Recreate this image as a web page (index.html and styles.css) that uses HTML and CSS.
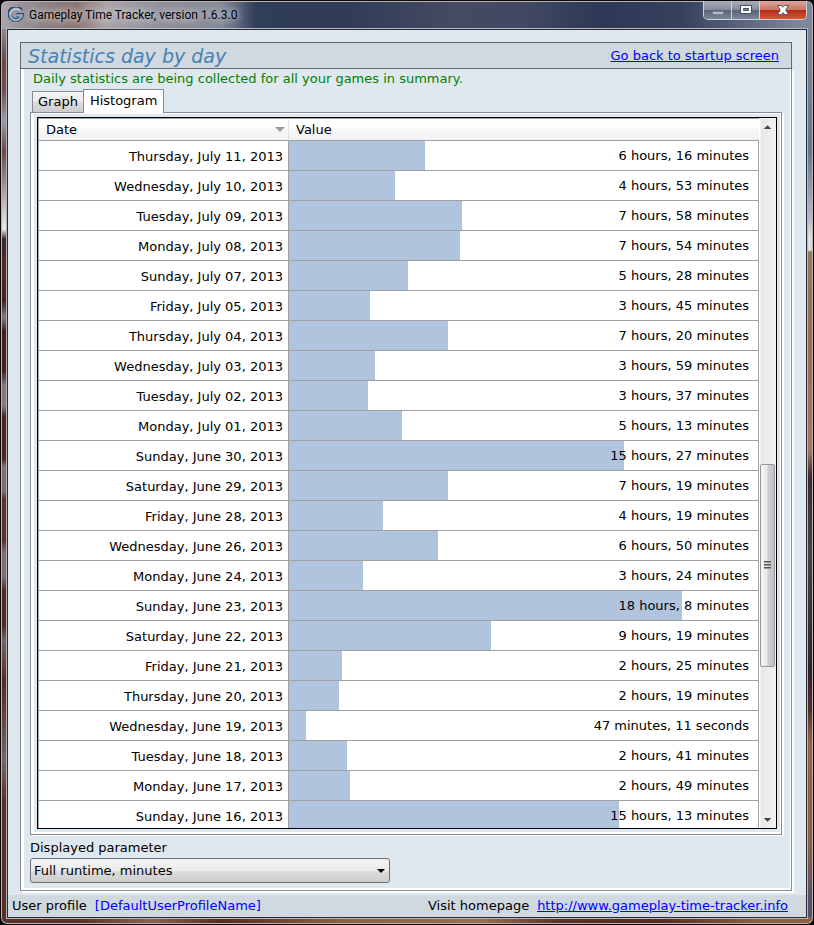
FILE: index.html
```html
<!DOCTYPE html>
<html lang="en">
<head>
  <meta charset="UTF-8">
  <meta name="viewport" content="width=device-width, initial-scale=1.0">
  <title>Gameplay Time Tracker</title>
  <link rel="stylesheet" href="styles.css">
</head>
<body>
  <div class="window">
    <header class="titlebar">
      <svg class="app-icon" viewBox="0 0 16 16" aria-hidden="true">
        <path d="M13 3.600A6.200 6.200 0 1 0 13.800 8H8.300" fill="none" stroke="#34485f" stroke-width="4"/>
        <path d="M12.600 4A5.800 5.800 0 1 0 13.600 8.400H8.300" fill="none" stroke="#8fb0d4" stroke-width="2.400"/>
        <path d="M12.300 3.600A6 6 0 0 0 2.300 7" fill="none" stroke="#d9e5f0" stroke-width="1"/>
      </svg>
      <span class="app-title">Gameplay Time Tracker, version 1.6.3.0</span>
      <div class="window-buttons">
        <button type="button" class="win-btn minimize" aria-label="Minimize">
          <svg width="14" height="12" viewBox="0 0 14 12"><rect x="1.5" y="7.5" width="11" height="3" fill="#b5b9c1" stroke="#777d89"/></svg>
        </button>
        <button type="button" class="win-btn maximize" aria-label="Maximize">
          <svg width="14" height="12" viewBox="0 0 14 12"><path d="M1.5 1.5h11v8h-11zM4.5 4.5h5v2h-5z" fill="#fff" fill-rule="evenodd" stroke="#454b5e"/></svg>
        </button>
        <button type="button" class="win-btn close" aria-label="Close">
          <svg width="14" height="12" viewBox="0 0 14 12"><path d="M1.500 1.500h3.700L7 3.300l1.800-1.800h3.700L9.700 6l2.800 4.500H8.800L7 8.700l-1.800 1.800H1.500L4.300 6z" fill="#fff" stroke="#53586c"/></svg>
        </button>
      </div>
    </header>

    <div class="client">
      <main class="panel">
        <div class="panel-header">
          <h1>Statistics day by day</h1>
          <a href="#">Go back to startup screen</a>
        </div>
        <div class="panel-body">
          <p class="hint">Daily statistics are being collected for all your games in summary.</p>
          <div class="tabs" role="tablist">
            <button type="button" class="tab" role="tab" aria-selected="false">Graph</button>
            <button type="button" class="tab active" role="tab" aria-selected="true">Histogram</button>
          </div>
          <div class="tab-page" role="tabpanel">
            <div class="grid">
              <div class="grid-view">
                <table class="stats">
                  <thead>
                    <tr>
                      <th class="date"><span class="head">Date <svg width="10" height="5" viewBox="0 0 10 5"><path d="M0 0h10L5 5z" fill="#999"/></svg></span></th>
                      <th class="value">Value</th>
                    </tr>
                  </thead>
                  <tbody>
                    <tr><td>Thursday, July 11, 2013</td><td><div class="meter"><div class="bar" style="width: 29%"></div><span>6 hours, 16 minutes</span></div></td></tr>
                    <tr><td>Wednesday, July 10, 2013</td><td><div class="meter"><div class="bar" style="width: 22.6%"></div><span>4 hours, 53 minutes</span></div></td></tr>
                    <tr><td>Tuesday, July 09, 2013</td><td><div class="meter"><div class="bar" style="width: 36.9%"></div><span>7 hours, 58 minutes</span></div></td></tr>
                    <tr><td>Monday, July 08, 2013</td><td><div class="meter"><div class="bar" style="width: 36.5%"></div><span>7 hours, 54 minutes</span></div></td></tr>
                    <tr><td>Sunday, July 07, 2013</td><td><div class="meter"><div class="bar" style="width: 25.4%"></div><span>5 hours, 28 minutes</span></div></td></tr>
                    <tr><td>Friday, July 05, 2013</td><td><div class="meter"><div class="bar" style="width: 17.3%"></div><span>3 hours, 45 minutes</span></div></td></tr>
                    <tr><td>Thursday, July 04, 2013</td><td><div class="meter"><div class="bar" style="width: 33.9%"></div><span>7 hours, 20 minutes</span></div></td></tr>
                    <tr><td>Wednesday, July 03, 2013</td><td><div class="meter"><div class="bar" style="width: 18.4%"></div><span>3 hours, 59 minutes</span></div></td></tr>
                    <tr><td>Tuesday, July 02, 2013</td><td><div class="meter"><div class="bar" style="width: 16.8%"></div><span>3 hours, 37 minutes</span></div></td></tr>
                    <tr><td>Monday, July 01, 2013</td><td><div class="meter"><div class="bar" style="width: 24.1%"></div><span>5 hours, 13 minutes</span></div></td></tr>
                    <tr><td>Sunday, June 30, 2013</td><td><div class="meter"><div class="bar" style="width: 71.4%"></div><span>15 hours, 27 minutes</span></div></td></tr>
                    <tr><td>Saturday, June 29, 2013</td><td><div class="meter"><div class="bar" style="width: 33.9%"></div><span>7 hours, 19 minutes</span></div></td></tr>
                    <tr><td>Friday, June 28, 2013</td><td><div class="meter"><div class="bar" style="width: 20%"></div><span>4 hours, 19 minutes</span></div></td></tr>
                    <tr><td>Wednesday, June 26, 2013</td><td><div class="meter"><div class="bar" style="width: 31.8%"></div><span>6 hours, 50 minutes</span></div></td></tr>
                    <tr><td>Monday, June 24, 2013</td><td><div class="meter"><div class="bar" style="width: 15.8%"></div><span>3 hours, 24 minutes</span></div></td></tr>
                    <tr><td>Sunday, June 23, 2013</td><td><div class="meter"><div class="bar" style="width: 83.8%"></div><span>18 hours, 8 minutes</span></div></td></tr>
                    <tr><td>Saturday, June 22, 2013</td><td><div class="meter"><div class="bar" style="width: 43.1%"></div><span>9 hours, 19 minutes</span></div></td></tr>
                    <tr><td>Friday, June 21, 2013</td><td><div class="meter"><div class="bar" style="width: 11.3%"></div><span>2 hours, 25 minutes</span></div></td></tr>
                    <tr><td>Thursday, June 20, 2013</td><td><div class="meter"><div class="bar" style="width: 10.7%"></div><span>2 hours, 19 minutes</span></div></td></tr>
                    <tr><td>Wednesday, June 19, 2013</td><td><div class="meter"><div class="bar" style="width: 3.6%"></div><span>47 minutes, 11 seconds</span></div></td></tr>
                    <tr><td>Tuesday, June 18, 2013</td><td><div class="meter"><div class="bar" style="width: 12.4%"></div><span>2 hours, 41 minutes</span></div></td></tr>
                    <tr><td>Monday, June 17, 2013</td><td><div class="meter"><div class="bar" style="width: 13%"></div><span>2 hours, 49 minutes</span></div></td></tr>
                    <tr><td>Sunday, June 16, 2013</td><td><div class="meter"><div class="bar" style="width: 70.4%"></div><span>15 hours, 13 minutes</span></div></td></tr>
                  </tbody>
                </table>
              </div>
              <div class="scrollbar" aria-hidden="true">
                <svg class="arrow" viewBox="0 0 16 18"><path d="M4 11l4-4 4 4z" fill="#444"/></svg>
                <div class="track-before"></div>
                <div class="thumb"><i></i><i></i><i></i></div>
                <div class="track-after"></div>
                <svg class="arrow" viewBox="0 0 16 18"><path d="M4 8l4 4 4-4z" fill="#444"/></svg>
              </div>
            </div>
          </div>
          <label class="param-label" for="parameter">Displayed parameter</label>
          <select id="parameter" class="param-select">
            <option>Full runtime, minutes</option>
          </select>
        </div>
      </main>

      <footer class="statusbar">
        <span>User profile</span>
        <a class="profile" href="#">[DefaultUserProfileName]</a>
        <span class="homepage">Visit homepage</span>
        <a href="#">http://www.gameplay-time-tracker.info</a>
      </footer>
    </div>
  </div>
</body>
</html>
```

FILE: styles.css
```css
* {
  box-sizing: border-box;
}
body {
  margin: 0;
  background: #0a0508;
  font-family: Verdana, "DejaVu Sans", sans-serif;
  font-size: 13px;
  line-height: 16px;
  color: #000;
}
button, select {
  font: inherit;
  color: inherit;
}
a {
  color: #0000ff;
}

/* window frame */
.window {
  display: flex;
  flex-direction: column;
  height: 100vh;
  padding: 0 5px 6px;
  border: 1px solid #0a0508;
  border-radius: 7px;
  box-shadow: inset 0 0 0 1px #b9b4b8;
  background:
    linear-gradient(90deg, #a9a5aa 0, #8b8287 40px, #8c7470 75px, #a9a4a8 105px, #8f8f9b 160px, #858a98 220px, #303e5a 255px, #303b56 340px, #454a62 450px, #434963 520px, #2c3855 600px, #35415d 680px, #7f889b 800px) top / 100% 28px no-repeat,
    linear-gradient(90deg, #5a3229 80px, #8a6450 150px, #5a2a20 220px, #8d6040 340px, #9a6d50 480px, #5a3229 560px, #5a2a20 660px, #8d6040 760px) bottom / 100% 7px no-repeat,
    linear-gradient(#8d8488 30px, #6a4842 60px, #70504c 90px, #9a9ca8 120px, #6a4842 150px, #c8bdba 205px, #eeeae8 228px, #3d2826 238px, #552a22 270px, #45201a 300px, #8a7775 316px, #45201a 330px, #45201a 370px, #8a7775 385px, #8a7775 405px, #4a2821 415px, #4a2821 458px, #826d6a 465px, #826d6a 490px, #5a3229 498px, #5a3229 540px, #846e6b 552px, #846e6b 575px, #532a20 590px, #532a20 625px, #7a6460 640px, #532a20 680px, #7a6460 760px, #5c2e24 800px) left / 50% 100% no-repeat,
    linear-gradient(#828a9b, #66748f 150px, #b5bccb 220px, #e0dcd8 235px, #e0dcd8 249px, #8f7a58 251px, #9c6b4d 340px, #a5765e 450px, #40292a 475px, #4b3f4a 550px, #33202a 670px, #50302a 710px, #9a6040 740px, #8d6040 840px, #5a5068 900px) right / 50% 100% no-repeat;
}
.titlebar {
  display: flex;
  align-items: center;
  height: 27px;
  flex: none;
  padding-left: 2px;
}
.app-icon {
  width: 16px;
  height: 16px;
}
.app-title {
  margin-left: 5px;
  font-family: "Segoe UI", Roboto, sans-serif;
  font-size: 12px;
  text-shadow: 0 0 6px #d8d8de, 0 0 10px #d8d8de;
}
.window-buttons {
  display: flex;
  align-self: flex-start;
  margin: 0 1px 0 auto;
  border: 1px solid #d0d3da;
  border-top: 0;
  border-radius: 0 0 5px 5px;
  overflow: hidden;
}
.win-btn {
  display: flex;
  align-items: center;
  justify-content: center;
  width: 28px;
  height: 18px;
  padding: 0;
  border: 0;
  border-right: 1px solid #d0d3da;
  background: linear-gradient(#a9adb8, #868c9b 48%, #596176 50%, #7d8598);
}
.win-btn.close {
  width: 46px;
  border-right: 0;
  background: linear-gradient(#dda89e, #cc7465 48%, #b02c12 50%, #d6563a);
}

.client {
  display: flex;
  flex-direction: column;
  flex: 1;
  min-height: 0;
  border: 1px solid #262c36;
  outline: 1px solid #b4b8be;
  margin: 1px 1px 0;
  background: #e0e8ef;
}

/* main panel */
.panel {
  display: flex;
  flex-direction: column;
  flex: 1;
  min-height: 0;
  margin: 12px 14px 4px 12px;
}
.panel-header {
  display: flex;
  align-items: center;
  justify-content: space-between;
  height: 27px;
  flex: none;
  padding: 0 12px 0 7px;
  border: 1px solid #65656c;
  background: #d0d8e0;
}
.panel-header h1 {
  margin: 0;
  font-size: 19px;
  line-height: 24px;
  font-weight: normal;
  font-style: italic;
  color: #4682b4;
}
.panel-body {
  display: flex;
  flex-direction: column;
  flex: 1;
  min-height: 0;
  padding: 2px 9px 7px;
  border: 1px solid #858b99;
  border-top: 0;
  box-shadow: inset 3px 0 #fff, inset -1px -2px #fff, 2px 2px #fff;
}
.hint {
  margin: 0 0 2px 3px;
  color: #008000;
}

/* tabs */
.tabs {
  display: flex;
  align-items: flex-end;
  height: 24px;
  flex: none;
  margin: 0 0 -1px 2px;
}
.tab {
  height: 22px;
  padding: 0 5px;
  border: 1px solid #858b99;
  border-right: 0;
  background: linear-gradient(#f3f3f3, #ebebeb 50%, #dddddd 50%, #cdcdcd);
}
.tab.active {
  height: 24px;
  padding: 0 6px 1px;
  border-right: 1px solid #858b99;
  border-bottom: 0;
  background: #fff;
  z-index: 1;
}
.tab-page {
  display: flex;
  flex: 1;
  min-height: 0;
  padding: 4px 4px 5px 6px;
  border: 1px solid #858b99;
  box-shadow: inset 3px 0 #fff, inset -1px -2px #fff, inset 0 1px #fff, 2px 1px #fff;
}

/* histogram table */
.grid {
  display: flex;
  flex: 1;
  border: 1px solid #000;
  background: #fff;
}
.grid-view {
  flex: 1;
  overflow: hidden;
}
.stats {
  width: 100%;
  table-layout: fixed;
  border-collapse: separate;
  border-spacing: 0;
  border-left: 1px solid #a0a0a0;
}
.stats th {
  height: 23px;
  padding: 0 7px;
  border-top: 1px solid #a0a0a0;
  border-bottom: 1px solid #a0a0a0;
  font-weight: normal;
  text-align: left;
  background: linear-gradient(#fff 40%, #f7f8fa 42%, #f1f2f4);
}
.stats th.date {
  width: 250px;
  padding-right: 3px;
  border-right: 1px solid #e0e1e3;
}
.head {
  display: flex;
  align-items: center;
  justify-content: space-between;
}
.stats td {
  height: 30px;
  padding: 0;
  border-right: 1px solid #a0a0a0;
  border-bottom: 1px solid #a0a0a0;
}
.stats td:first-child {
  padding: 2px 5px 0 0;
  text-align: right;
}
.meter {
  display: grid;
  align-items: center;
  height: 29px;
}
.meter > * {
  grid-area: 1 / 1;
}
.meter span {
  padding-right: 9px;
  text-align: right;
}
.bar {
  height: 100%;
  background: #b0c4de;
}

/* scrollbar */
.scrollbar {
  display: flex;
  flex-direction: column;
  width: 17px;
  padding: 0 1px;
  background: linear-gradient(90deg, #fff 1px, #e8e8e8 2px, #f2f2f2);
}
.arrow {
  width: 15px;
  height: 18px;
  flex: none;
}
.track-before {
  flex: 328;
}
.thumb {
  display: flex;
  flex: 202;
  flex-direction: column;
  align-items: center;
  justify-content: center;
  gap: 1px;
  border: 1px solid #979797;
  border-radius: 2px;
  background: linear-gradient(90deg, #f5f5f5, #e8e8ea 45%, #cfcfd3 55%, #c0c0c5);
}
.thumb i {
  width: 7px;
  height: 2px;
  border-top: 1px solid #555;
  background: #999;
}
.track-after {
  flex: 143;
}

/* displayed parameter */
.param-label {
  margin-top: 5px;
}
.param-select {
  appearance: none;
  width: 360px;
  height: 25px;
  margin-top: 2px;
  padding: 0 20px 0 3px;
  border: 1px solid #707070;
  border-radius: 3px;
  background:
    url("data:image/svg+xml,%3Csvg xmlns='http://www.w3.org/2000/svg' width='8' height='4'%3E%3Cpath d='M0 0h8L4 4z'/%3E%3C/svg%3E") right 4px center no-repeat,
    linear-gradient(#f3f3f3, #ebebeb 50%, #dddddd 50%, #cdcdcd);
}

.statusbar {
  display: flex;
  align-items: center;
  height: 22px;
  flex: none;
  padding: 0 18px 0 4px;
  background: #d0d8e0;
}
.statusbar a {
  margin-left: 8px;
}
.statusbar .profile {
  text-decoration: none;
}
.homepage {
  margin-left: auto;
}
```
